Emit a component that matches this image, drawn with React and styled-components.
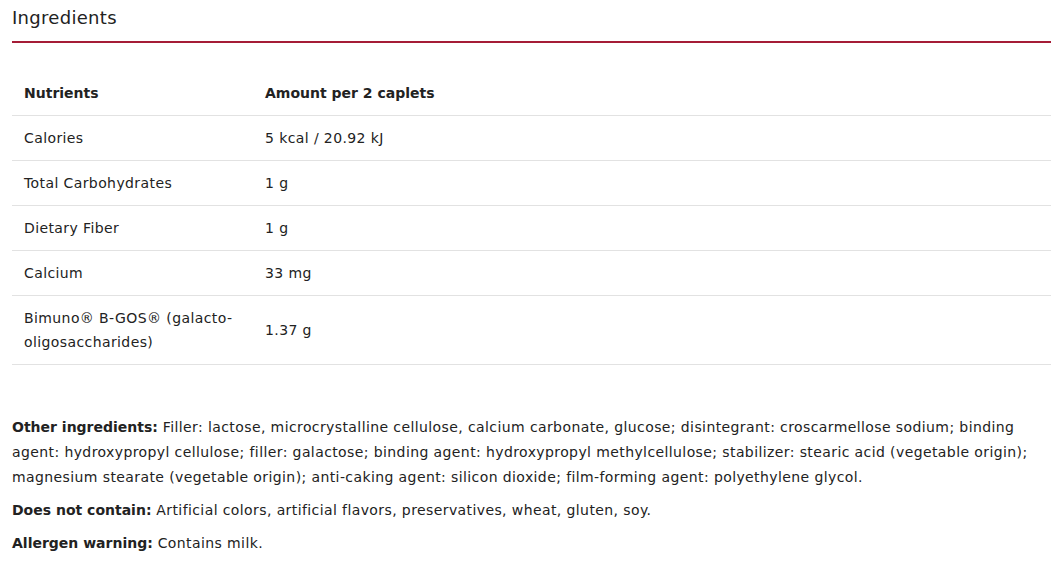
import React from 'react';
import styled, { createGlobalStyle } from 'styled-components';

const GlobalStyle = createGlobalStyle`
  body {
    margin: 0;
    background: #fff;
    font-family: "DejaVu Sans", "Open Sans", sans-serif;
    color: #222;
  }
`;

const Section = styled.section`
  padding: 0 10px 0 12px;
`;

const Title = styled.h2`
  margin: 0;
  padding: 6px 0 11px;
  font-size: 18px;
  font-weight: 400;
  line-height: 24px;
  letter-spacing: 0.3px;
  color: #222;
  border-bottom: 2px solid #a51c36;
`;

const Table = styled.table`
  width: 100%;
  margin-top: 28px;
  border-collapse: collapse;
  font-size: 14px;
  line-height: 24px;
`;

const Cell = styled.td`
  padding: 10px 12px;
  border-bottom: 1px solid #e2e2e2;
  vertical-align: middle;
  text-align: left;
  width: ${props => props.$width || 'auto'};
  font-weight: ${props => (props.$head ? 700 : 400)};
  letter-spacing: ${props => (props.$head ? '0' : '0.4px')};
`;

const Notes = styled.div`
  margin-top: 50px;
  font-size: 14px;
  line-height: 25px;
  letter-spacing: 0.4px;
`;

const Note = styled.p`
  margin: 0 0 8px;
`;

const Label = styled.strong`
  font-weight: 700;
  letter-spacing: 0;
`;

const rows = [
  ['Calories', '5 kcal / 20.92 kJ'],
  ['Total Carbohydrates', '1 g'],
  ['Dietary Fiber', '1 g'],
  ['Calcium', '33 mg'],
  ['Bimuno® B-GOS® (galacto-oligosaccharides)', '1.37 g'],
];

export default function App() {
  return (
    <>
      <GlobalStyle />
      <Section>
        <Title>Ingredients</Title>
        <Table>
          <thead>
            <tr>
              <Cell as="th" $head $width="217px">Nutrients</Cell>
              <Cell as="th" $head>Amount per 2 caplets</Cell>
            </tr>
          </thead>
          <tbody>
            {rows.map(([name, amount]) => (
              <tr key={name}>
                <Cell $width="217px">{name}</Cell>
                <Cell>{amount}</Cell>
              </tr>
            ))}
          </tbody>
        </Table>
        <Notes>
          <Note>
            <Label>Other ingredients:</Label> Filler: lactose, microcrystalline cellulose, calcium carbonate, glucose; disintegrant: croscarmellose sodium; binding agent: hydroxypropyl cellulose; filler: galactose; binding agent: hydroxypropyl methylcellulose; stabilizer: stearic acid (vegetable origin); magnesium stearate (vegetable origin); anti-caking agent: silicon dioxide; film-forming agent: polyethylene glycol.
          </Note>
          <Note>
            <Label>Does not contain:</Label> Artificial colors, artificial flavors, preservatives, wheat, gluten, soy.
          </Note>
          <Note>
            <Label>Allergen warning:</Label> Contains milk.
          </Note>
        </Notes>
      </Section>
    </>
  );
}
